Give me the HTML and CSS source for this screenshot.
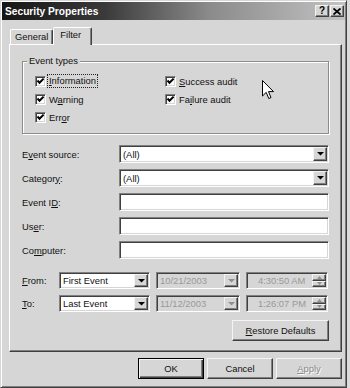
FILE: index.html
```html
<!DOCTYPE html>
<html>
<head>
<meta charset="utf-8">
<link rel="stylesheet" href="styles.css">
</head>
<body>
<div class="dialog">
  <div class="titlebar">
    <span class="title">Security Properties</span>
    <div class="tb-btns">
      <span class="tb-btn raised">?</span>
      <span class="tb-btn raised"><svg width="8" height="7" viewBox="0 0 8 7"><path d="M0.5 0.5 L7.5 6.5 M7.5 0.5 L0.5 6.5" stroke="#000" stroke-width="1.8"/></svg></span>
    </div>
  </div>

  <div class="tabs">
    <div class="tab">General</div>
    <div class="tab active">Filter</div>
  </div>

  <div class="panel">
    <div class="group">
      <span class="group-label">Event types</span>
      <div class="checks">
        <div class="check"><span class="box"><svg width="9" height="9" viewBox="0 0 9 9"><path d="M1.5 3.5 L3.5 5.8 L7.6 1.6" fill="none" stroke="#000" stroke-width="2"/></svg></span><span class="focus"><u>I</u>nformation</span></div>
        <div class="check"><span class="box"><svg width="9" height="9" viewBox="0 0 9 9"><path d="M1.5 3.5 L3.5 5.8 L7.6 1.6" fill="none" stroke="#000" stroke-width="2"/></svg></span><span><u>S</u>uccess audit</span></div>
        <div class="check"><span class="box"><svg width="9" height="9" viewBox="0 0 9 9"><path d="M1.5 3.5 L3.5 5.8 L7.6 1.6" fill="none" stroke="#000" stroke-width="2"/></svg></span><span>W<u>a</u>rning</span></div>
        <div class="check"><span class="box"><svg width="9" height="9" viewBox="0 0 9 9"><path d="M1.5 3.5 L3.5 5.8 L7.6 1.6" fill="none" stroke="#000" stroke-width="2"/></svg></span><span>Fa<u>i</u>lure audit</span></div>
        <div class="check"><span class="box"><svg width="9" height="9" viewBox="0 0 9 9"><path d="M1.5 3.5 L3.5 5.8 L7.6 1.6" fill="none" stroke="#000" stroke-width="2"/></svg></span><span>Err<u>o</u>r</span></div>
      </div>
    </div>

    <div class="fields">
      <span class="lbl">E<u>v</u>ent source:</span>
      <div class="combo sunken"><span class="val">(All)</span><span class="dd raised"><svg width="7" height="4" viewBox="0 0 7 4"><polygon points="0,0 7,0 3.5,3.5" fill="#000"/></svg></span></div>
      <span class="lbl">Categor<u>y</u>:</span>
      <div class="combo sunken"><span class="val">(All)</span><span class="dd raised"><svg width="7" height="4" viewBox="0 0 7 4"><polygon points="0,0 7,0 3.5,3.5" fill="#000"/></svg></span></div>
      <span class="lbl">Event I<u>D</u>:</span>
      <div class="edit sunken"></div>
      <span class="lbl">Us<u>e</u>r:</span>
      <div class="edit sunken"></div>
      <span class="lbl">Co<u>m</u>puter:</span>
      <div class="edit sunken"></div>
    </div>

    <div class="range">
      <span class="lbl"><u>F</u>rom:</span>
      <div class="combo sunken"><span class="val">First Event</span><span class="dd raised"><svg width="7" height="4" viewBox="0 0 7 4"><polygon points="0,0 7,0 3.5,3.5" fill="#000"/></svg></span></div>
      <div class="combo sunken disabled"><span class="val">10/21/2003</span><span class="dd raised"><svg width="7" height="4" viewBox="0 0 7 4"><polygon points="0,0 7,0 3.5,3.5" fill="#909090"/></svg></span></div>
      <div class="combo sunken disabled"><span class="val time">4:30:50 AM</span><span class="spin"><span class="sp raised"><svg width="5" height="3" viewBox="0 0 5 3"><polygon points="0,3 5,3 2.5,0" fill="#909090"/></svg></span><span class="sp raised"><svg width="5" height="3" viewBox="0 0 5 3"><polygon points="0,0 5,0 2.5,3" fill="#909090"/></svg></span></span></div>

      <span class="lbl"><u>T</u>o:</span>
      <div class="combo sunken"><span class="val">Last Event</span><span class="dd raised"><svg width="7" height="4" viewBox="0 0 7 4"><polygon points="0,0 7,0 3.5,3.5" fill="#000"/></svg></span></div>
      <div class="combo sunken disabled"><span class="val">11/12/2003</span><span class="dd raised"><svg width="7" height="4" viewBox="0 0 7 4"><polygon points="0,0 7,0 3.5,3.5" fill="#909090"/></svg></span></div>
      <div class="combo sunken disabled"><span class="val time">1:26:07 PM</span><span class="spin"><span class="sp raised"><svg width="5" height="3" viewBox="0 0 5 3"><polygon points="0,3 5,3 2.5,0" fill="#909090"/></svg></span><span class="sp raised"><svg width="5" height="3" viewBox="0 0 5 3"><polygon points="0,0 5,0 2.5,3" fill="#909090"/></svg></span></span></div>
    </div>

    <div class="restore-row">
      <span class="btn raised restore"><u>R</u>estore Defaults</span>
    </div>
  </div>

  <div class="buttons">
    <span class="btn raised default">OK</span>
    <span class="btn raised">Cancel</span>
    <span class="btn raised disabled-btn"><u>A</u>pply</span>
  </div>

  <svg class="cursor" width="13" height="20" viewBox="0 0 13 20"><path d="M0.5 0.5 L0.5 16 L4.2 12.4 L6.8 18.5 L9 17.6 L6.5 11.6 L11.5 11.6 Z" fill="#fff" stroke="#000" stroke-width="1"/></svg>
</div>
</body>
</html>
```

FILE: styles.css
```css
* { box-sizing: border-box; }

body {
  margin: 0;
  background: #dcdcdc;
  font-family: "Liberation Sans", Arial, sans-serif;
  font-size: 9.4px;
  color: #111;
}

u { text-decoration: underline; text-underline-offset: 1px; }

.dialog {
  position: relative;
  width: 347px;
  height: 388px;
  background: #d6d6d6;
  border: 1px solid;
  border-color: #d6d6d6 #404040 #404040 #d6d6d6;
  box-shadow: inset 1px 1px #fff, inset -1px -1px #808080;
  padding: 1px;
}

.raised {
  background: #d6d6d6;
  border: 1px solid;
  border-color: #f4f4f4 #404040 #404040 #f4f4f4;
  box-shadow: inset -1px -1px #808080;
}

.sunken {
  border: 1px solid;
  border-color: #808080 #fff #fff #808080;
  box-shadow: inset 1px 1px #404040, inset -1px -1px #d6d6d6;
  background: #fff;
}

/* title bar */
.titlebar {
  height: 18px;
  display: flex;
  align-items: center;
  justify-content: space-between;
  padding: 0 1px 0 3px;
  background: linear-gradient(to right, #161616 0%, #3a3a3a 30%, #8a8a8a 60%, #c2c2c2 100%);
}
.title {
  color: #fff;
  font-weight: bold;
  font-size: 10.2px;
}
.tb-btns { display: flex; gap: 1px; }
.tb-btn {
  width: 14px;
  height: 12px;
  display: flex;
  align-items: center;
  justify-content: center;
  font-weight: bold;
  font-size: 10px;
  color: #000;
  line-height: 1;
}

/* tabs */
.tabs {
  display: flex;
  align-items: flex-end;
  height: 17px;
  margin-top: 7px;
  padding-left: 8px;
}
.tab {
  height: 15px;
  padding: 1px 4px 0 4px;
  border: 1px solid;
  border-bottom: none;
  border-color: #fff #404040 transparent #fff;
  box-shadow: inset -1px 0 #808080;
  border-radius: 2px 2px 0 0;
  line-height: 12px;
}
.tab.active {
  position: relative;
  z-index: 1;
  height: 18px;
  margin-bottom: -1px;
  padding: 1px 10px 0 6px;
  background: #d6d6d6;
}

/* panel */
.panel {
  width: 333px;
  margin-left: 7px;
  height: 308px;
  border: 1px solid;
  border-color: #fff #404040 #404040 #fff;
  box-shadow: inset -1px -1px #808080;
  padding: 16px 12px 10px 12px;
  display: flex;
  flex-direction: column;
}

.group {
  position: relative;
  height: 73px;
  border: 1px solid #8c8c8c;
  box-shadow: 1px 1px 0 #fff, inset 1px 1px 0 #fff;
  padding: 10px 0 0 12px;
}
.group-label {
  position: absolute;
  left: 4px;
  top: -7px;
  padding: 0 2px;
  background: #d6d6d6;
  line-height: 12px;
}
.checks {
  display: grid;
  grid-template-columns: 130px auto;
  grid-auto-rows: 18px;
  align-items: center;
}
.check {
  display: flex;
  align-items: center;
  gap: 3px;
}
.box {
  width: 11px;
  height: 11px;
  background: #fff;
  border: 1px solid;
  border-color: #808080 #fff #fff #808080;
  box-shadow: inset 1px 1px #404040, inset -1px -1px #d6d6d6;
  display: flex;
  align-items: center;
  justify-content: center;
}
.focus {
  outline: 1px dotted #222;
  padding: 0 1px;
  line-height: 12px;
  margin-left: -1px;
}

/* fields */
.fields {
  margin-top: 11px;
  display: grid;
  grid-template-columns: 97px 1fr;
  grid-auto-rows: 18px;
  row-gap: 6px;
  align-items: center;
}
.lbl { white-space: nowrap; }
.combo, .edit { height: 100%; }
.combo {
  display: flex;
  align-items: center;
  padding: 1px;
}
.val {
  flex: 1;
  padding-left: 2px;
  white-space: nowrap;
  overflow: hidden;
}
.val.time { padding-left: 10px; }
.dd {
  width: 14px;
  height: 100%;
  display: flex;
  align-items: center;
  justify-content: center;
}
.combo.disabled { background: #d6d6d6; color: #999; }

.spin {
  width: 14px;
  height: 100%;
  display: flex;
  flex-direction: column;
}
.sp {
  flex: 1;
  display: flex;
  align-items: center;
  justify-content: center;
}

/* range */
.range {
  margin-top: 13px;
  display: grid;
  grid-template-columns: 31px 91px 84px 82px;
  column-gap: 6px;
  row-gap: 6px;
  grid-auto-rows: 17px;
  align-items: center;
}

.restore-row {
  margin-top: 8px;
  display: flex;
  justify-content: flex-end;
}
.btn {
  height: 21px;
  display: flex;
  align-items: center;
  justify-content: center;
  white-space: nowrap;
}
.restore { width: 97px; }

/* bottom buttons */
.buttons {
  margin-top: 6px;
  display: flex;
  justify-content: flex-end;
  gap: 3px;
  padding-right: 3px;
}
.buttons .btn { width: 66px; }
.btn.default {
  border: 1px solid #000;
  box-shadow: inset 1px 1px #f4f4f4, inset -1px -1px #404040, inset -2px -2px #808080;
}
.disabled-btn { color: #8a8a8a; text-shadow: 1px 1px #fff; }

.cursor {
  position: absolute;
  left: 261px;
  top: 79px;
}
```
